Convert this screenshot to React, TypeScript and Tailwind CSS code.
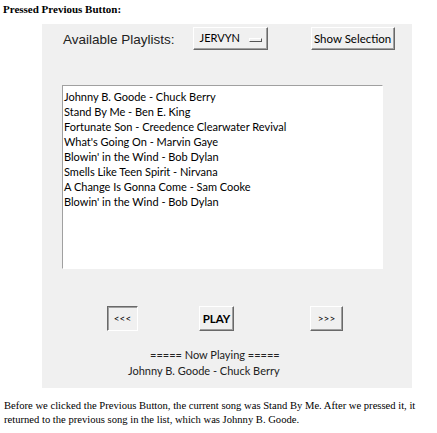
import React from "react"

const songs = [
  "Johnny B. Goode - Chuck Berry",
  "Stand By Me - Ben E. King",
  "Fortunate Son - Creedence Clearwater Revival",
  "What's Going On - Marvin Gaye",
  "Blowin' in the Wind - Bob Dylan",
  "Smells Like Teen Spirit - Nirvana",
  "A Change Is Gonna Come - Sam Cooke",
  "Blowin' in the Wind - Bob Dylan",
]

const ui = { fontFamily: 'Lato, "Noto Sans", sans-serif' }
const serif = { fontFamily: '"Liberation Serif", "Times New Roman", serif' }
const raised =
  "shrink-0 border border-t-white border-l-white border-r-[#696969] border-b-[#696969] shadow-[inset_-1px_-1px_0_#a0a0a0] bg-[#f0f0f0]"
const sunken =
  "shrink-0 border border-t-[#696969] border-l-[#696969] border-r-white border-b-white shadow-[inset_1px_1px_0_#a0a0a0] bg-[#f0f0f0]"

export default function App() {
  return (
    <div className="w-[437px] h-[433px] bg-white overflow-hidden text-black">
      <p className="pl-[3px] pt-[3px] text-[11px] leading-[13px] font-bold" style={serif}>
        Pressed Previous Button:
      </p>

      <div className="ml-[42px] mt-[8px] w-[370px] h-[364px] bg-[#f0f0f0] flex flex-col" style={ui}>
        <div className="flex items-center h-[23px] mt-[3px] whitespace-nowrap">
          <span className="ml-[21px] mt-[4px] shrink-0 text-[13.5px] text-[#222]" style={{ fontFamily: '"Liberation Sans", Arial, sans-serif' }}>
            Available Playlists:
          </span>
          <div className={`ml-[18px] w-[75px] h-[23px] flex items-center pl-[6px] text-[11px] ${raised}`}>
            <span>JERVYN</span>
            <span className="ml-[9px] mt-[3px] w-[13px] h-[4px] border border-t-white border-l-white border-r-[#555] border-b-[#555]" />
          </div>
          <div className={`ml-[43px] w-[84px] h-[23px] flex items-center justify-center text-[11.5px] ${raised}`}>
            Show Selection
          </div>
        </div>

        <div className="ml-[20px] mt-[35px] w-[321px] h-[184px] bg-white border border-t-[#a0a0a0] border-l-[#a0a0a0] border-r-white border-b-white pl-[1px] pt-[3px]">
          {songs.map((s, i) => (
            <div key={i} className="text-[11px] leading-[15px] whitespace-nowrap">
              {s}
            </div>
          ))}
        </div>

        <div className="flex items-center mt-[37px] h-[25px]">
          <div className={`ml-[65px] w-[31px] h-[25px] flex items-center justify-center text-[10px] ${sunken}`}>
            &lt;&lt;&lt;
          </div>
          <div className={`ml-[61px] w-[35px] h-[25px] flex items-center justify-center text-[11.5px] font-bold ${raised}`}>
            PLAY
          </div>
          <div className={`ml-[76px] w-[33px] h-[25px] flex items-center justify-center text-[10px] ${raised}`}>
            &gt;&gt;&gt;
          </div>
        </div>

        <div className="mt-[16px] pl-[108px] text-[11px] leading-[16px] text-[#222] whitespace-nowrap">===== Now Playing =====</div>
        <div className="pl-[86px] text-[11px] leading-[16px] text-[#222] whitespace-nowrap">Johnny B. Goode - Chuck Berry</div>
      </div>

      <p className="pl-[4px] pr-[6px] mt-[11px] text-[10.6px] leading-[14px]" style={serif}>
        Before we clicked the Previous Button, the current song was Stand By Me. After we pressed it, it returned to the previous song in the list, which was Johnny B. Goode.
      </p>
    </div>
  )
}
